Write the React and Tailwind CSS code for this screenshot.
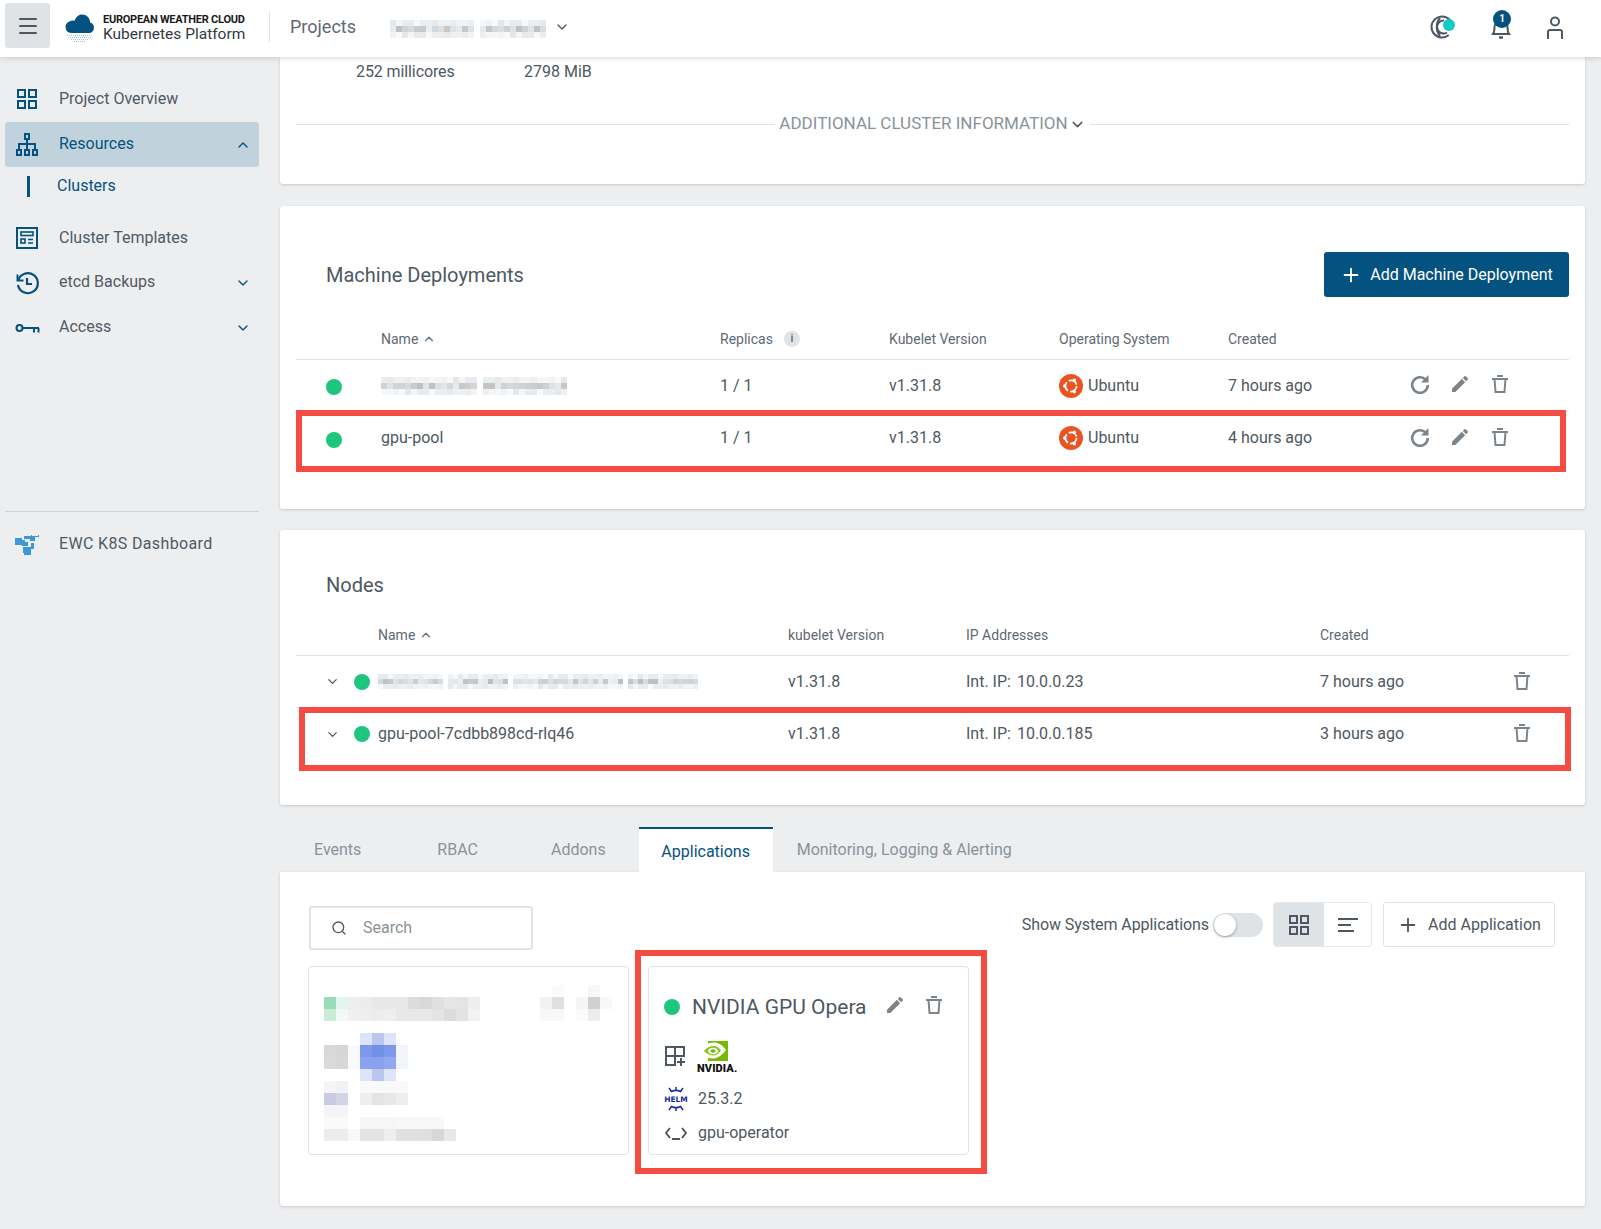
import { ChevronDown, ChevronUp, Menu, Plus, Search } from 'lucide-react';

const NAVY = '#04527f';

// pixelated blur over redacted names
function Mosaic({ seed, cols, rows, cell = 8, gaps = [] }) {
  let n = seed;
  const rects = [];
  for (let r = 0; r < rows; r++) {
    for (let c = 0; c < cols; c++) {
      n = (n * 9301 + 49297) % 233280;
      if (gaps.includes(c)) continue;
      const edge = r === 0 || r === rows - 1;
      const g = edge ? 232 + (n % 18) : 190 + (n % 50);
      const tint = n % 3 === 0 ? 8 : 0;
      rects.push(
        <rect key={`${r}-${c}`} x={c * cell} y={r * cell} width={cell} height={cell} fill={`rgb(${g - tint},${g},${g + tint})`} />
      );
    }
  }
  return (
    <svg width={cols * cell} height={rows * cell} className="block" shapeRendering="crispEdges">
      {rects}
    </svg>
  );
}

const APP_BLUR = [
  [19, 19, ['#fbfbfb', '', '', '#f7f7f7']],
  [31, 0, ['#9adcb8', '#e3f5ec', '#eeeeee', '#ececec', '#e8e8e8', '#e8e8e8', '#e8e8e8', '#dcdcdc', '#d8d8d8', '#e0e0e0', '#e6e6e6', '#e4e4e4', '#eeeeee', '', '', '', '', '', '#f2f2f2', '#e0e0e0', '', '#f5f5f5', '#d0d0d0', '#f8f8f8']],
  [43, 0, ['#c8ecd8', '#f2f9f5', '#f0f0f0', '#eeeeee', '#ececec', '#eeeeee', '#e8e8e8', '#e8e8e8', '#e8e8e8', '#e4e4e4', '#dcdcdc', '#e2e4e4', '#f2f2f2', '', '', '', '', '', '#f8f8f8', '#f8f8f8', '', '#fafafa', '#ececec']],
  [67, 3, ['#dde3f8', '#b9c6f0', '#dde3f8']],
  [79, 0, ['#d8d8d8', '#d6d6d6', '#f8f8ff', '#7d98ec', '#7190e8', '#7d98ec', '#f3f5fd']],
  [91, 0, ['#dadada', '#d8d8d8', '#f8f8ff', '#8aa2ee', '#8aa2ee', '#92a8ef', '#f3f5fd']],
  [103, 3, ['#dde3f8', '#b9c6f0', '#dde3f8']],
  [115, 0, ['#f5f5f8', '#f2f2f6', '', '#f9f9f9', '#f9f9f9', '#f9f9f9', '#f9f9f9']],
  [127, 0, ['#c9cbe0', '#d3d5e6', '', '#eeeeee', '#e4e4e4', '#e8e8e8', '#eeeeee']],
  [139, 0, ['#f3f3f8', '#f3f3f8']],
  [151, 0, ['#fafafa', '#fafafa', '', '#f6f6f6', '#f6f6f6', '#f6f6f6', '#f8f8f8', '#f8f8f8', '#f8f8f8', '#f8f8f8']],
  [163, 0, ['#ececec', '#ececec', '#f8f8f8', '#e4e4e4', '#e4e4e4', '#eeeeee', '#e0e0e0', '#e0e0e0', '#dce0e2', '#d8d8d8', '#e8e8e8']],
];

function AppBlur() {
  return (
    <svg width="319" height="187" className="block" shapeRendering="crispEdges">
      {APP_BLUR.map(([y, start, cells]) =>
        cells.map((fill, i) => (fill ? <rect key={`${y}-${i}`} x={15 + (start + i) * 12} y={y - 1} width="12" height="12" fill={fill} /> : null))
      )}
    </svg>
  );
}

function Dot({ className = '' }) {
  return <span className={`block w-4 h-4 rounded-full bg-[#1ec67d] shrink-0 ${className}`} />;
}

function GridIcon({ size = 20, color = NAVY }) {
  return (
    <svg width={size} height={size} viewBox="0 0 20 20" fill="none" stroke={color} strokeWidth="2">
      <rect x="1" y="1" width="7" height="7" />
      <rect x="12" y="1" width="7" height="7" />
      <rect x="1" y="12" width="7" height="7" />
      <rect x="12" y="12" width="7" height="7" />
    </svg>
  );
}

function SitemapIcon() {
  return (
    <svg width="22" height="24" viewBox="0 0 22 24" fill="none" stroke={NAVY} strokeWidth="2">
      <rect x="9" y="1" width="4" height="5" />
      <path d="M11 6v10M3 16v-5h16v5" />
      <rect x="1" y="17" width="4" height="5" />
      <rect x="9" y="17" width="4" height="5" />
      <rect x="17" y="17" width="4" height="5" />
    </svg>
  );
}

function TemplateIcon() {
  return (
    <svg width="22" height="22" viewBox="0 0 22 22" fill="none" stroke={NAVY} strokeWidth="2">
      <rect x="1" y="1" width="20" height="20" />
      <rect x="5" y="5" width="12" height="3.5" strokeWidth="1.6" />
      <rect x="5" y="12" width="4" height="4" strokeWidth="1.6" />
      <path d="M12 12.5h5M12 16h5" strokeWidth="1.6" />
    </svg>
  );
}

function HistoryIcon() {
  return (
    <svg width="24" height="24" viewBox="0 0 24 24" fill="none" stroke={NAVY} strokeWidth="2.2">
      <path d="M3.2 9.5A10 10 0 1 1 3 14" />
      <path d="M2.5 3.5v6h6" strokeWidth="2" />
      <path d="M12 7v6h5" />
    </svg>
  );
}

function KeyIcon() {
  return (
    <svg width="25" height="12" viewBox="0 0 25 12" fill="none" stroke={NAVY} strokeWidth="2">
      <circle cx="4.5" cy="6" r="3" />
      <path d="M7.5 6H24M19 6v4.5M23.5 6v4.5" />
    </svg>
  );
}

function DashIcon() {
  return (
    <svg width="24" height="20" viewBox="0 0 24 20" fill="#3d97d8">
      <path d="M0 3h7v2h3v2h3v4H7v-1H0z" />
      <path d="M9 1h7v-1h1v1h6v1h1v-2h-1v2h-3v4h-5V4H9z" />
      <path d="M8 12h8v-4h3v6h-3v6H9v-2H8z" />
    </svg>
  );
}

function RefreshIcon() {
  return (
    <svg width="20" height="20" viewBox="0 0 20 20" fill="none" stroke="#7c848b" strokeWidth="2.6">
      <path d="M15.800 5.800A7.800 7.800 0 1 0 17.800 11" />
      <path d="M18.500 1v7.500h-7.500z" fill="#7c848b" stroke="none" />
    </svg>
  );
}

function PencilIcon() {
  return (
    <svg width="16" height="16" viewBox="3 3 18 18" fill="#7c848b">
      <path d="M3 17.25V21h3.75L17.81 9.94l-3.75-3.75L3 17.25zM20.71 7.04a1 1 0 0 0 0-1.41l-2.34-2.34a1 1 0 0 0-1.41 0l-1.83 1.83 3.75 3.75 1.83-1.83z" />
    </svg>
  );
}

function TrashIcon() {
  return (
    <svg width="16" height="18" viewBox="0 0 16 18" fill="none" stroke="#7c848b" strokeWidth="2">
      <path d="M0 4h16M5 1h6" />
      <path d="M2.5 4l1 13h9l1-13" />
    </svg>
  );
}

function UbuntuIcon() {
  return (
    <svg width="24" height="24" viewBox="0 0 24 24" className="shrink-0">
      <circle cx="12" cy="12" r="12" fill="#e95420" />
      <circle cx="12" cy="12" r="5.6" fill="none" stroke="#fff" strokeWidth="1.7" strokeDasharray="9.5 2.2" />
      <circle cx="5.6" cy="12" r="1.7" fill="#fff" />
      <circle cx="15.3" cy="6.3" r="1.7" fill="#fff" />
      <circle cx="15.3" cy="17.7" r="1.7" fill="#fff" />
    </svg>
  );
}

function CloudLogo() {
  return (
    <svg width="32" height="28" viewBox="0 0 32 28">
      <path d="M7 19a6 6 0 0 1-1.500-11.600 6 6 0 0 1 5-.6C12 3 14.500 0.500 18 0.500c4.500 0 8 3.500 8.200 8A5.500 5.500 0 0 1 26 19z" fill={NAVY} />
      <path d="M3 21.500h26M4 23.500h24M7 25.500h18M10 27.500h12" stroke="#9fc3d8" strokeWidth="1" strokeDasharray="1 1" />
    </svg>
  );
}

function Header() {
  return (
    <header className="relative z-20 h-[57px] bg-white shadow-[0_1px_6px_rgba(0,0,0,0.16)] flex items-start">
      <button className="ml-[5px] mt-[3px] w-[45px] h-[45px] rounded-[3px] bg-[#dfe3e6] flex items-center justify-center text-[#4d5862]">
        <Menu size={24} strokeWidth={2} />
      </button>
      <div className="ml-[14px] mt-[14px]">
        <CloudLogo />
      </div>
      <div className="ml-[7px] mt-[13px] w-[143px] flex flex-col">
        <span className="text-[11px] leading-[13px] font-bold text-[#1a1a1a] tracking-[-0.25px] whitespace-nowrap">EUROPEAN WEATHER CLOUD</span>
        <span className="text-[15.5px] leading-[16px] text-[#333b42] whitespace-nowrap">Kubernetes Platform</span>
      </div>
      <div className="ml-[23px] mt-[12px] w-px h-[30px] bg-[#dfe3e6]" />
      <span className="ml-[20px] mt-[15px] text-[18px] leading-[24px] text-[#5f6973]">Projects</span>
      <div className="ml-[34px] mt-[20px]">
        <Mosaic seed={17} cols={26} rows={3} cell={6} gaps={[14]} />
      </div>
      <ChevronDown size={16} strokeWidth={2} className="ml-[8px] mt-[19px] text-[#4d5862]" />
      <div className="ml-auto flex items-start">
        <div className="relative w-[28px] h-[28px] mt-[14px] mr-[32px]">
          <svg width="26" height="26" viewBox="0 0 26 26" fill="none" stroke="#4d5862" strokeWidth="2">
            <circle cx="12" cy="13" r="10.500" strokeDasharray="50 16" transform="rotate(50 12 13)" />
            <path d="M14 6.500a6.500 6.500 0 1 0 3 12" />
            <path d="M10 4a14 14 0 0 0 0 18" />
          </svg>
          <span className="absolute left-[13px] top-[5px] w-[12px] h-[12px] rounded-full bg-[#12ccc4]" />
        </div>
        <div className="relative w-[24px] h-[28px] mt-[16px] mr-[32px]">
          <svg width="22" height="24" viewBox="0 0 22 24" fill="none" stroke="#4d5862" strokeWidth="2">
            <path d="M3 18c1.500-2 1.500-4 1.500-7a6.500 6.500 0 0 1 13 0c0 3 0 5 1.500 7zM2 18h18" />
            <path d="M9 21.500h4" strokeWidth="2.500" />
          </svg>
          <span className="absolute left-[3px] top-[-6px] w-[18px] h-[18px] rounded-full bg-[#04527f] text-white text-[10px] leading-[18px] font-bold text-center">1</span>
        </div>
        <svg width="18" height="24" viewBox="0 0 18 24" fill="none" stroke="#4d5862" strokeWidth="2" className="mt-[16px] mr-[37px]">
          <circle cx="9" cy="5.500" r="4" />
          <path d="M2 23v-7a2 2 0 0 1 2-2h10a2 2 0 0 1 2 2v7" />
        </svg>
      </div>
    </header>
  );
}

function NavItem({ icon, label, active, chevron, labelClass = '' }) {
  return (
    <div className={`ml-[5px] w-[254px] h-[45px] flex items-center rounded-[3px] ${active ? 'bg-[#c0d2db]' : ''}`}>
      <span className="w-[44px] flex justify-center">{icon}</span>
      <span className={`ml-[10px] text-[16px] ${chevron ? '-mt-[2px]' : ''} ${active ? 'text-[#04527f]' : 'text-[#4f5a63]'} ${labelClass}`}>{label}</span>
      {chevron === 'up' && <ChevronUp size={16} strokeWidth={2} className="ml-auto mr-[8px] text-[#04527f]" />}
      {chevron === 'down' && <ChevronDown size={16} strokeWidth={2} className="ml-auto mr-[8px] text-[#04527f]" />}
    </div>
  );
}

function Sidebar() {
  return (
    <aside className="w-[280px] shrink-0 pt-[19px]">
      <NavItem icon={<GridIcon />} label="Project Overview" />
      <div className="mt-px">
        <NavItem icon={<SitemapIcon />} label="Resources" active chevron="up" />
      </div>
      <div className="h-[38px] mb-[10px] flex items-center pl-[27px]">
        <span className="w-[3px] h-[21px] bg-[#04527f]" />
        <span className="ml-[27px] text-[16px] text-[#04527f]">Clusters</span>
      </div>
      <NavItem icon={<TemplateIcon />} label="Cluster Templates" />
      <NavItem icon={<HistoryIcon />} label="etcd Backups" chevron="down" />
      <NavItem icon={<KeyIcon />} label="Access" chevron="down" />
      <div className="ml-[5px] mt-[161px] w-[254px] h-px bg-[#cbd3dc]" />
      <div className="mt-[10px]">
        <NavItem icon={<DashIcon />} label="EWC K8S Dashboard" labelClass="tracking-[0.35px] -mt-[2px]" />
      </div>
    </aside>
  );
}

function Highlight({ className }) {
  return <span className={`absolute border-[6px] border-[#f44c43] pointer-events-none ${className}`} />;
}

function SortName({ className = '' }) {
  return (
    <span className={`flex items-center gap-[4px] ${className}`}>
      Name <ChevronUp size={14} strokeWidth={2} />
    </span>
  );
}

const MD_COLS = 'grid grid-cols-[85px_339px_169px_170px_169px_172px_1fr] items-center';

function MachineRow({ name, age, last }) {
  return (
    <div className={`relative h-[52px] ${MD_COLS} text-[16px] text-[#4d5862] ${last ? '' : 'border-b border-[#eceef0]'}`}>
      <Dot className="ml-[30px] mt-[3px]" />
      <span>{name}</span>
      <span>1 / 1</span>
      <span>v1.31.8</span>
      <span className="flex items-center gap-[5px]">
        <UbuntuIcon /> Ubuntu
      </span>
      <span>{age}</span>
      <span className="flex items-center -mt-[3px] ml-[10px]">
        <RefreshIcon />
        <span className="ml-[22px]">
          <PencilIcon />
        </span>
        <span className="ml-[24px]">
          <TrashIcon />
        </span>
      </span>
      {last && <Highlight className="left-0 right-[3px] top-[-2px] bottom-[-8px]" />}
    </div>
  );
}

const NODE_COLS = 'grid grid-cols-[82px_410px_178px_354px_200px_1fr] items-center';

function NodeRow({ name, ip, age, last }) {
  return (
    <div className={`relative h-[52px] ${NODE_COLS} text-[16px] text-[#4d5862] ${last ? '' : 'border-b border-[#eceef0]'}`}>
      <span className="flex items-center pl-[29px]">
        <ChevronDown size={15} strokeWidth={2} />
        <Dot className="ml-[14px]" />
      </span>
      <span className="flex">{name}</span>
      <span>v1.31.8</span>
      <span>
        Int. IP: <span className="ml-[2px]">{ip}</span>
      </span>
      <span>{age}</span>
      <span className="-ml-[6px] -mt-[2px]">
        <TrashIcon />
      </span>
      {last && <Highlight className="left-[3px] right-[-2px] top-[-1px] bottom-[-11px]" />}
    </div>
  );
}

function Tab({ label, active, className = '' }) {
  return active ? (
    <span className={`w-[134px] h-[45px] bg-white border-t-2 border-[#04527f] flex items-center justify-center text-[16px] text-[#04527f] pt-[3px] ${className}`}>{label}</span>
  ) : (
    <span className={`text-[16px] text-[#8a9299] self-center whitespace-nowrap ${className}`}>{label}</span>
  );
}

function HelmIcon() {
  return (
    <svg width="24" height="26" viewBox="0 0 24 26" fill="none" stroke="#1a2a9c" strokeWidth="1.500">
      <path d="M5 2l2.500 3.500c3-1.500 6-1.500 9 0L19 2M12 1v4M5 24l2.500-3.500c3 1.500 6 1.500 9 0L19 24M12 25v-4" />
      <text x="12" y="15.800" textAnchor="middle" fill="#1a2a9c" stroke="none" fontSize="7.500" fontWeight="700" fontFamily="'DejaVu Sans', sans-serif">HELM</text>
    </svg>
  );
}

function NvidiaLogo() {
  return (
    <div className="w-[42px] flex flex-col items-start">
      <svg width="29" height="20" viewBox="0 0 29 20" className="ml-[2px]">
        <rect x="9" width="20" height="20" fill="#76b900" />
        <path d="M0 10C4 4 10 1 16 1.500 21 2 25 6 27 9c-3 4-7 8-13 8.500C8 18 3 14 0 10z" fill="#fff" />
        <path d="M5 10c3-4 7-5.500 11-5 3 .5 5 3 6 4.500-2 3-5 5-8 5-4 0-7-2.500-9-4.500z" fill="#8ac416" />
        <ellipse cx="14" cy="10" rx="5" ry="3.200" fill="#fff" />
        <ellipse cx="14" cy="10" rx="2.600" ry="1.800" fill="#76b900" />
      </svg>
      <span className="mt-[3px] text-[11px] leading-[9px] font-black text-[#111] tracking-[0.1px]">NVIDIA.</span>
    </div>
  );
}

function App2() {
  return (
    <div className="relative w-[321px] h-[189px] rounded-[4px] border border-[#dfe3e6] bg-white ml-[19px]">
      <div className="flex items-center h-[28px] mt-[26px] pl-[15px]">
        <Dot />
        <span className="ml-[12px] w-[195px] text-[21px] leading-[28px] text-[#4d5862] whitespace-nowrap overflow-hidden">NVIDIA GPU Opera</span>
        <span className="-mt-[5px]">
          <PencilIcon />
        </span>
        <span className="ml-[23px] -mt-[5px]">
          <TrashIcon />
        </span>
      </div>
      <div className="flex items-start h-[49px] mt-[21px] pl-[16px]">
        <svg width="21" height="21" viewBox="0 0 21 21" fill="none" stroke="#4d5862" strokeWidth="2" className="mt-[4px]">
          <path d="M1 1h9v9H1zM10 1h9v9h-9zM1 10h9v9H1zM16 12v8M12 16h8" />
        </svg>
        <span className="ml-[11px] -mt-[1px]">
          <NvidiaLogo />
        </span>
      </div>
      <div className="flex items-center h-[26px] -mt-[5px] pl-[15px]">
        <HelmIcon />
        <span className="ml-[10px] text-[16px] text-[#4d5862]">25.3.2</span>
      </div>
      <div className="flex items-center h-[26px] mt-[8px] pl-[16px]">
        <svg width="22" height="14" viewBox="0 0 22 14" fill="none" stroke="#4d5862" strokeWidth="2">
          <path d="M5 2L1 7l4 5M17 2l4 5-4 5M7 13h8" />
        </svg>
        <span className="ml-[11px] text-[16px] text-[#4d5862]">gpu-operator</span>
      </div>
      <Highlight className="left-[-14px] right-[-19px] top-[-17px] bottom-[-20px]" />
    </div>
  );
}

export default function App() {
  return (
    <div className="min-h-[1229px] bg-[#edeef0] font-['Roboto',sans-serif] overflow-hidden">
      <Header />
      <div className="flex">
        <Sidebar />
        <main className="w-[1305px]">
          {/* Cluster summary, scrolled under the header */}
          <section className="h-[127px] bg-white rounded-b-[3px] shadow-[0_1px_3px_rgba(0,0,0,0.16)] px-[16px]">
            <div className="h-[30px] flex items-center text-[16px] text-[#4d5862]">
              <span className="ml-[60px] w-[168px] tracking-[-0.1px]">252 millicores</span>
              <span>2798 MiB</span>
            </div>
            <div className="mt-[26px] h-[22px] flex items-center gap-[4px]">
              <span className="flex-1 h-px bg-[#dfe3e6]" />
              <span className="text-[17px] text-[#8a9299] whitespace-nowrap">ADDITIONAL CLUSTER INFORMATION</span>
              <ChevronDown size={17} strokeWidth={2} className="text-[#4d5862] -ml-[3px]" />
              <span className="flex-1 h-px bg-[#dfe3e6]" />
            </div>
          </section>

          <section className="mt-[22px] h-[303px] bg-white rounded-[3px] shadow-[0_1px_3px_rgba(0,0,0,0.16)] px-[16px] pt-[46px]">
            <div className="flex items-center justify-between h-[45px]">
              <h2 className="ml-[30px] text-[20px] text-[#4d5862]">Machine Deployments</h2>
              <button className="w-[245px] h-[45px] bg-[#04527f] rounded-[3px] text-white text-[16px] flex items-center justify-center gap-[8px]">
                <Plus size={22} strokeWidth={2} /> Add Machine Deployment
              </button>
            </div>
            <div className={`mt-[22px] h-[41px] ${MD_COLS} text-[14px] text-[#5f6973] border-b border-[#dfe3e6]`}>
              <span />
              <SortName />
              <span className="flex items-center gap-[11px]">
                Replicas
                <span className="w-[16px] h-[16px] rounded-full bg-[#dfe3e6] text-[11px] leading-[16px] font-bold text-center text-[#6f777e]">i</span>
              </span>
              <span>Kubelet Version</span>
              <span>Operating System</span>
              <span>Created</span>
            </div>
            <MachineRow name={<Mosaic seed={5} cols={31} rows={3} cell={6} gaps={[16]} />} age="7 hours ago" />
            <MachineRow name="gpu-pool" age="4 hours ago" last />
          </section>

          <section className="mt-[21px] h-[275px] bg-white rounded-[3px] shadow-[0_1px_3px_rgba(0,0,0,0.16)] px-[16px] pt-[41px]">
            <h2 className="ml-[30px] h-[28px] text-[20px] leading-[28px] text-[#4d5862]">Nodes</h2>
            <div className={`mt-[16px] h-[41px] ${NODE_COLS} text-[14px] text-[#5f6973] border-b border-[#dfe3e6]`}>
              <span />
              <SortName />
              <span>kubelet Version</span>
              <span>IP Addresses</span>
              <span>Created</span>
            </div>
            <NodeRow name={<Mosaic seed={31} cols={64} rows={3} cell={5} gaps={[13, 26, 49]} />} ip="10.0.0.23" age="7 hours ago" />
            <NodeRow name="gpu-pool-7cdbb898cd-rlq46" ip="10.0.0.185" age="3 hours ago" last />
          </section>

          <nav className="mt-[22px] h-[45px] flex items-center pl-[34px]">
            <Tab label="Events" />
            <Tab label="RBAC" className="ml-[76px]" />
            <Tab label="Addons" className="ml-[73px]" />
            <Tab label="Applications" active className="ml-[33px]" />
            <Tab label="Monitoring, Logging &amp; Alerting" className="ml-[24px]" />
          </nav>

          <section className="h-[334px] bg-white rounded-b-[3px] shadow-[0_1px_3px_rgba(0,0,0,0.16)] pl-[29px] pr-[30px] pt-[30px]">
            <div className="flex items-start">
              <div className="mt-[4px] w-[224px] h-[44px] border-2 border-[#dfe3e6] rounded-[3px] flex items-center pl-[20px] text-[16px] text-[#8a9299]">
                <Search size={16} strokeWidth={2} className="text-[#4d5862]" />
                <span className="ml-[16px]">Search</span>
              </div>
              <div className="ml-auto flex items-center h-[45px] text-[#4d5862]">
                <span className="text-[16px] whitespace-nowrap tracking-[-0.08px]">Show System Applications</span>
                <span className="ml-[4px] w-[50px] h-[24px] rounded-full bg-[#dfe3e6] flex items-center">
                  <span className="ml-[1px] w-[22px] h-[22px] rounded-full bg-white shadow-[0_1px_3px_rgba(0,0,0,0.35)]" />
                </span>
                <div className="ml-[10px] w-[99px] h-[45px] flex rounded-[3px] border border-[#e6e8ea] overflow-hidden">
                  <span className="w-[50px] bg-[#dfe3e6] flex items-center justify-center">
                    <GridIcon color="#4d5862" />
                  </span>
                  <span className="flex-1 flex items-center justify-center">
                    <svg width="20" height="14" viewBox="0 0 20 14" stroke="#4d5862" strokeWidth="2">
                      <path d="M0 1h20M0 7h13M0 13h16" />
                    </svg>
                  </span>
                </div>
                <button className="ml-[11px] w-[172px] h-[45px] rounded-[3px] border border-[#e0e3e6] flex items-center justify-center gap-[9px] text-[16px]">
                  <Plus size={22} strokeWidth={2} /> Add Application
                </button>
              </div>
            </div>
            <div className="flex mt-[16px] -ml-px">
              <div className="w-[321px] h-[189px] rounded-[4px] border border-[#dfe3e6] bg-white overflow-hidden">
                <AppBlur />
              </div>
              <App2 />
            </div>
          </section>
        </main>
      </div>
    </div>
  );
}
